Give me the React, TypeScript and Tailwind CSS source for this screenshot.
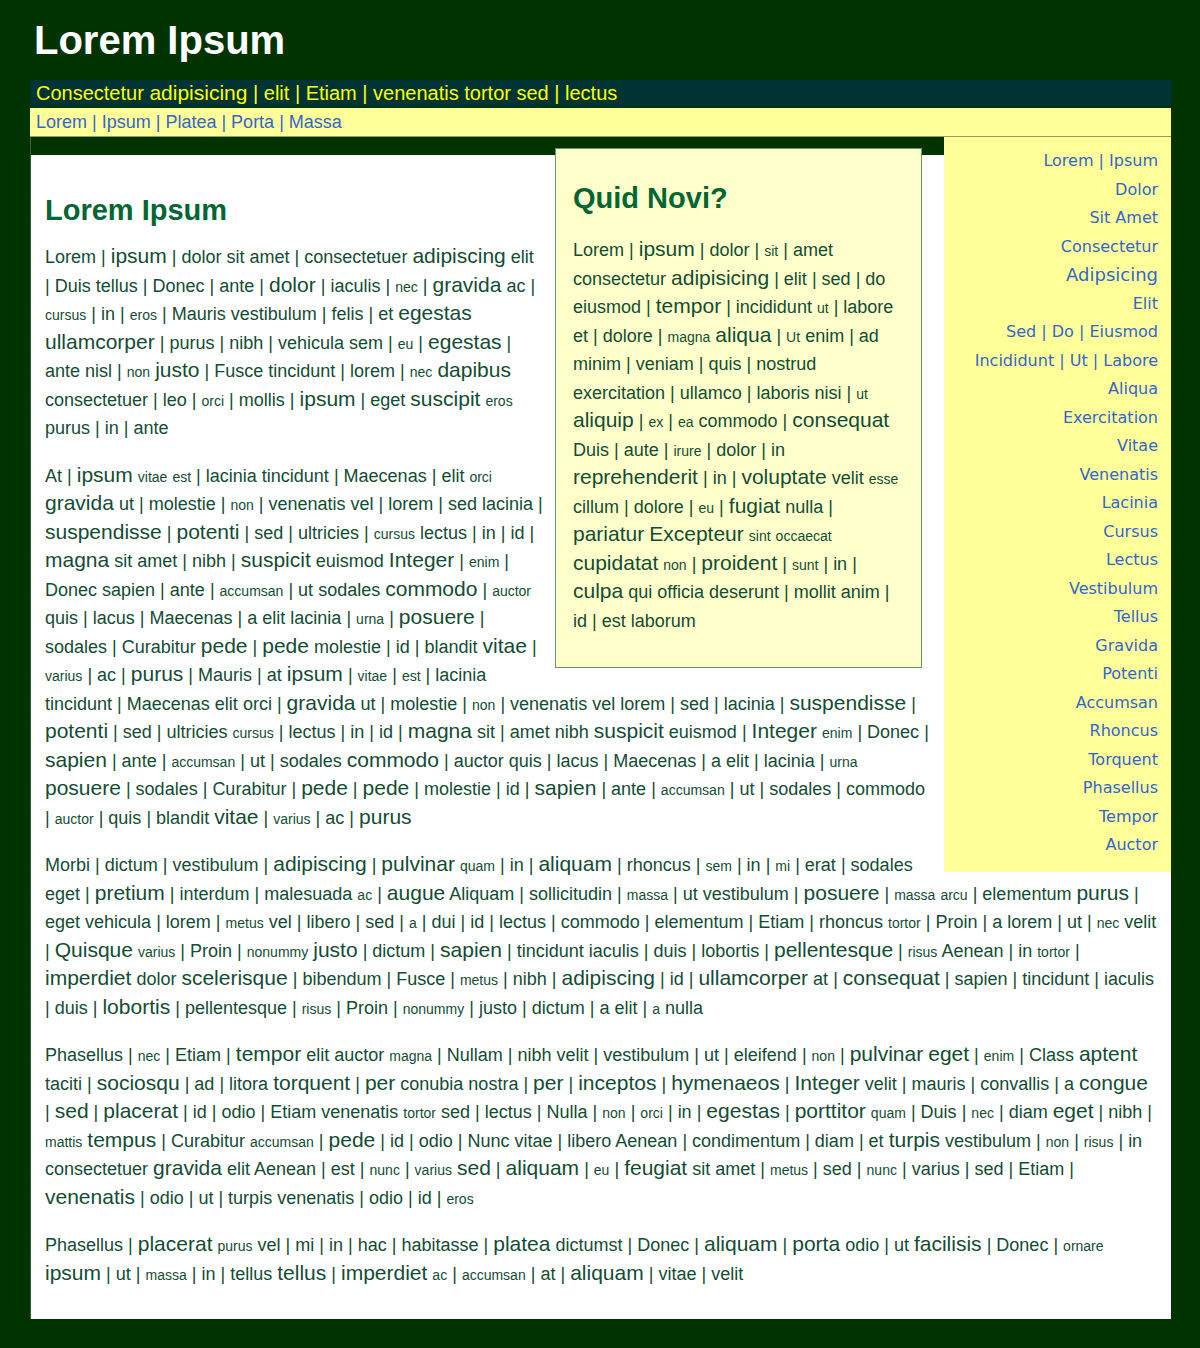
import { Fragment } from "react"

// words: "+word" = large, "-word" = small, plain = normal
const Words = ({ t }: { t: string }) => {
  const tokens = t.split(" ")
  return (
    <>
      {tokens.map((raw, i) => {
        let w = raw
        let cls = "text-[18px] leading-none"
        if (raw.startsWith("+")) {
          w = raw.slice(1)
          cls = "text-[21px] leading-none"
        } else if (raw.startsWith("-")) {
          w = raw.slice(1)
          cls = "text-[14px] leading-none"
        }
        return (
          <Fragment key={i}>
            <span className={cls}>{w}</span>
            {i < tokens.length - 1 ? " " : ""}
          </Fragment>
        )
      })}
    </>
  )
}

const paras = [
  "Lorem | +ipsum | dolor sit amet | consectetuer +adipiscing elit | Duis tellus | Donec | ante | +dolor | iaculis | -nec | +gravida ac | -cursus | in | -eros | Mauris vestibulum | felis | et +egestas +ullamcorper | purus | nibh | vehicula sem | -eu | +egestas | ante nisl | -non +justo | Fusce tincidunt | lorem | -nec +dapibus consectetuer | leo | -orci | mollis | +ipsum | eget +suscipit -eros purus | in | ante",
  "At | +ipsum -vitae -est | lacinia tincidunt | Maecenas | elit -orci +gravida ut | molestie | -non | venenatis vel | lorem | sed lacinia | +suspendisse | +potenti | sed | ultricies | -cursus lectus | in | id | +magna sit amet | nibh | +suspicit euismod +Integer | -enim | Donec sapien | ante | -accumsan | ut sodales +commodo | -auctor quis | lacus | Maecenas | a elit lacinia | -urna | +posuere | sodales | Curabitur +pede | +pede molestie | id | blandit +vitae | -varius | ac | +purus | Mauris | at +ipsum | -vitae | -est | lacinia tincidunt | Maecenas elit orci | +gravida ut | molestie | -non | venenatis vel lorem | sed | lacinia | +suspendisse | +potenti | sed | ultricies -cursus | lectus | in | id | +magna sit | amet nibh +suspicit euismod | +Integer -enim | Donec | +sapien | ante | -accumsan | ut | sodales +commodo | auctor quis | lacus | Maecenas | a elit | lacinia | -urna +posuere | sodales | Curabitur | +pede | +pede | molestie | id | +sapien | ante | -accumsan | ut | sodales | commodo | -auctor | quis | blandit +vitae | -varius | ac | +purus",
  "Morbi | dictum | vestibulum | +adipiscing | +pulvinar -quam | in | +aliquam | rhoncus | -sem | in | -mi | erat | sodales eget | +pretium | interdum | malesuada -ac | +augue Aliquam | sollicitudin | -massa | ut vestibulum | +posuere | -massa -arcu | elementum +purus | eget vehicula | lorem | -metus vel | libero | sed | -a | dui | id | lectus | commodo | elementum | Etiam | rhoncus -tortor | Proin | a lorem | ut | -nec velit | +Quisque -varius | Proin | -nonummy +justo | dictum | +sapien | tincidunt iaculis | duis | lobortis | +pellentesque | -risus Aenean | in -tortor | +imperdiet dolor +scelerisque | bibendum | Fusce | -metus | nibh | +adipiscing | id | +ullamcorper at | +consequat | sapien | tincidunt | iaculis | duis | +lobortis | pellentesque | -risus | Proin | -nonummy | justo | dictum | a elit | -a nulla",
  "Phasellus | -nec | Etiam | +tempor elit auctor -magna | Nullam | nibh velit | vestibulum | ut | eleifend | -non | +pulvinar +eget | -enim | Class +aptent taciti | +sociosqu | ad | litora +torquent | +per conubia nostra | +per | +inceptos | +hymenaeos | +Integer velit | mauris | convallis | a +congue | +sed | +placerat | id | odio | Etiam venenatis -tortor sed | lectus | Nulla | -non | -orci | in | +egestas | +porttitor -quam | Duis | -nec | diam +eget | nibh | -mattis +tempus | Curabitur -accumsan | +pede | id | odio | Nunc vitae | libero Aenean | condimentum | diam | et +turpis vestibulum | -non | -risus | in consectetuer +gravida elit Aenean | est | -nunc | -varius +sed | +aliquam | -eu | +feugiat sit amet | -metus | sed | -nunc | varius | sed | Etiam | +venenatis | odio | ut | turpis venenatis | odio | id | -eros",
  "Phasellus | +placerat -purus vel | mi | in | hac | habitasse | +platea dictumst | Donec | +aliquam | +porta odio | ut +facilisis | Donec | -ornare +ipsum | ut | -massa | in | tellus +tellus | +imperdiet -ac | -accumsan | at | +aliquam | vitae | velit",
]

const quid =
  "Lorem | +ipsum | dolor | -sit | amet consectetur +adipisicing | elit | sed | do eiusmod | +tempor | incididunt -ut | labore et | dolore | -magna +aliqua | -Ut enim | ad minim | veniam | quis | nostrud exercitation | ullamco | laboris nisi | -ut +aliquip | -ex | -ea commodo | +consequat Duis | aute | -irure | dolor | in +reprehenderit | in | +voluptate velit -esse cillum | dolore | -eu | +fugiat nulla | +pariatur +Excepteur -sint -occaecat +cupidatat -non | +proident | -sunt | in | +culpa qui officia deserunt | mollit anim | id | est laborum"

const side = [
  "Lorem | Ipsum",
  "Dolor",
  "Sit Amet",
  "Consectetur",
  "Adipsicing",
  "Elit",
  "Sed | Do | Eiusmod",
  "Incididunt | Ut | Labore",
  "Aliqua",
  "Exercitation",
  "Vitae",
  "Venenatis",
  "Lacinia",
  "Cursus",
  "Lectus",
  "Vestibulum",
  "Tellus",
  "Gravida",
  "Potenti",
  "Accumsan",
  "Rhoncus",
  "Torquent",
  "Phasellus",
  "Tempor",
  "Auctor",
]

const App = () => {
  return (
    <div className="min-h-[1348px] bg-[#003300] pl-[30px] pr-[29px] pt-[18px] pb-[28px] font-['Liberation_Sans',Arial,sans-serif]">
      {/* header */}
      <h1 className="text-[40px] font-bold text-white leading-[44px] mb-[18px] pl-[4px]">Lorem Ipsum</h1>
      <div className="bg-[#003333] h-[26px] leading-[26px] text-[20px] text-[#ffff00] pl-[6px] mb-[2px] whitespace-nowrap">
        Consectetur <span className="text-[21px]">adipisicing</span> | elit | Etiam | venenatis tortor sed | lectus
      </div>
      <div className="bg-[#ffff99] h-[29px] leading-[28px] text-[18px] text-[#3366cc] pl-[6px] border-b border-[#999966]">
        Lorem | Ipsum | Platea | Porta | Massa
      </div>

      {/* body */}
      <div className="bg-white flow-root border-l border-[#3d5c3d] text-[#124d33]">
        <div className="float-right w-[227px] ml-[14px] bg-[#ffff99] pt-[10px] pb-[12px] pr-[13px] text-right text-[16px] leading-[28.5px] text-[#3366cc] font-['DejaVu_Sans',Verdana,sans-serif] overflow-hidden whitespace-nowrap">
          {side.map((s, i) => (
            <div key={i} className={s === "Adipsicing" ? "text-[18px]" : ""}>{s}</div>
          ))}
        </div>
        <div className="h-[18px] bg-[#003300]" />
        <div className="float-right w-[367px] -mt-[7px] mr-[8px] ml-[12px] bg-[#ffffcc] border border-[#669966] px-[17px] pt-[31px] pb-[32px]">
          <h3 className="text-[29px] font-bold leading-[36px] text-[#006633] mb-[20px]">Quid Novi?</h3>
          <p className="text-[18px] leading-[28.5px]"><Words t={quid} /></p>
        </div>
        <div className="px-[14px] pt-[37px] pb-[12px]">
          <h2 className="text-[29px] font-bold leading-[36px] text-[#006633] mb-[15px]">Lorem Ipsum</h2>
          {paras.map((p, i) => (
            <p key={i} className="text-[18px] leading-[28.5px] mb-[19px]"><Words t={p} /></p>
          ))}
        </div>
      </div>
    </div>
  )
}

export default App
